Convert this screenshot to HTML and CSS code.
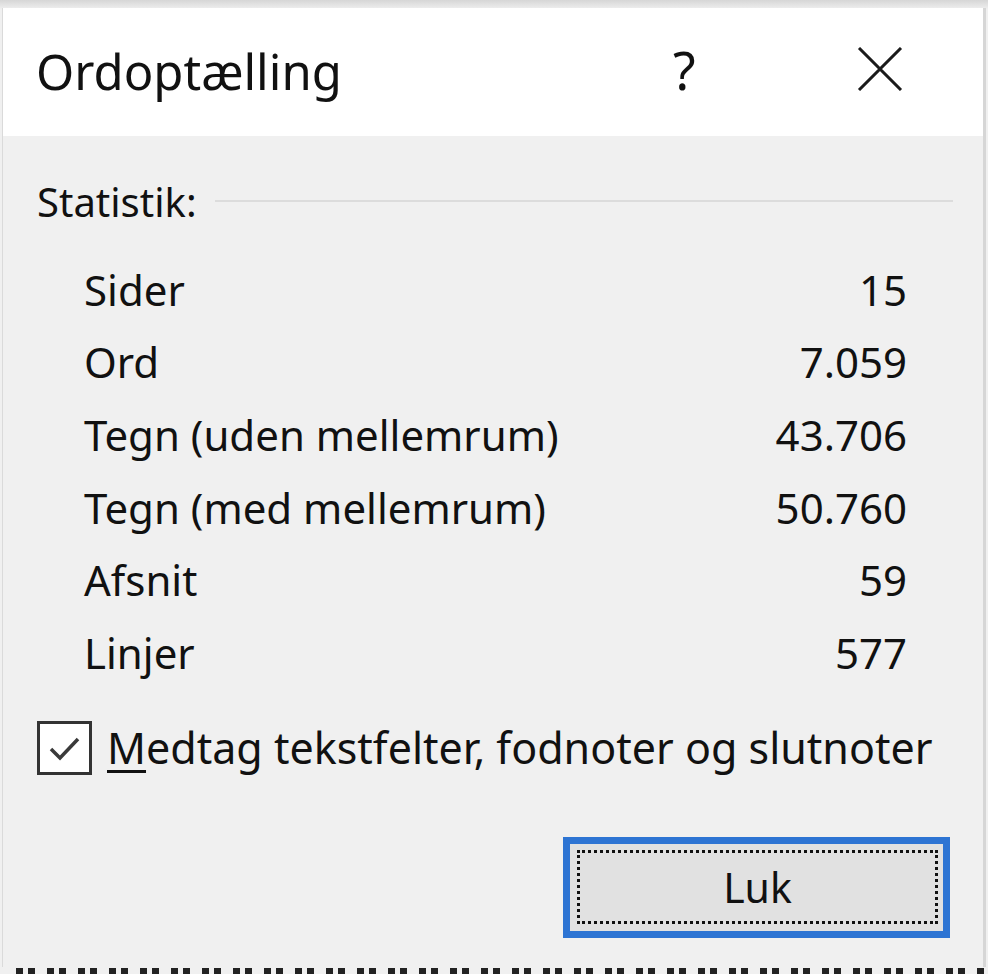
FILE: index.html
```html
<!DOCTYPE html>
<html lang="da">
<head>
<meta charset="utf-8">
<title>Ordoptælling</title>
<link rel="stylesheet" href="styles.css">
</head>
<body>
<div class="window">
  <div class="titlebar">
    <div class="title">Ordoptælling</div>
    <div class="help">?</div>
    <div class="close">
      <svg width="46" height="44" viewBox="0 0 46 44"><path d="M2 1 L44 43 M44 1 L2 43" stroke="#1a1a1a" stroke-width="3" fill="none"/></svg>
    </div>
  </div>
  <div class="content">
    <div class="group">
      <span class="group-label">Statistik:</span>
      <span class="group-line"></span>
    </div>
    <div class="stats">
      <div class="row"><span>Sider</span><span>15</span></div>
      <div class="row"><span>Ord</span><span>7.059</span></div>
      <div class="row"><span>Tegn (uden mellemrum)</span><span>43.706</span></div>
      <div class="row"><span>Tegn (med mellemrum)</span><span>50.760</span></div>
      <div class="row"><span>Afsnit</span><span>59</span></div>
      <div class="row"><span>Linjer</span><span>577</span></div>
    </div>
    <div class="check-row">
      <span class="checkbox">
        <svg width="40" height="36" viewBox="0 0 40 36"><path d="M6 19 L15 28 L33 9" stroke="#3a3a3a" stroke-width="3.5" fill="none"/></svg>
      </span>
      <span class="check-label"><u>M</u>edtag tekstfelter, fodnoter og slutnoter</span>
    </div>
    <div class="buttons">
      <div class="button"><div class="focus">Luk</div></div>
    </div>
  </div>
</div>
<div class="behind"></div>
</body>
</html>
```

FILE: styles.css
```css
html, body {
  margin: 0;
  padding: 0;
}
body {
  width: 988px;
  height: 974px;
  overflow: hidden;
  background: linear-gradient(#d6d6d6, #ececec 8px, #f0f0f0 9px);
  font-family: "Noto Sans", "Open Sans", sans-serif;
  color: #111;
}
.window {
  margin: 8px 2px 0 2px;
  height: 959px;
  background: #f0f0f0;
  border-left: 1px solid #dadada;
  border-right: 3px solid #d6d6d6;
  box-sizing: border-box;
}
.titlebar {
  height: 128px;
  background: #fff;
  display: flex;
  align-items: center;
  padding-left: 33px;
  box-sizing: border-box;
}
.title {
  font-size: 49px;
  flex: 1;
  margin-top: -2px;
}
.help {
  font-size: 52px;
  width: 40px;
  margin-right: 144px;
  margin-top: -6px;
}
.close {
  width: 46px;
  height: 44px;
  margin-right: 80px;
  margin-top: -6px;
}
.close svg { display: block; }
.content {
  padding: 40px 33px 0 34px;
}
.group {
  display: flex;
  align-items: center;
  height: 50px;
  margin-right: -3px;
}
.group-label {
  font-size: 40px;
}
.group-line {
  flex: 1;
  height: 2px;
  background: #dcdcdc;
  margin-left: 18px;
}
.stats {
  margin-top: 27px;
  padding-left: 47px;
  padding-right: 43px;
}
.row {
  display: flex;
  justify-content: space-between;
  height: 72.6px;
  align-items: center;
  font-size: 42px;
}
.check-row {
  display: flex;
  align-items: center;
  margin-top: 31px;
}
.checkbox {
  width: 55px;
  height: 54px;
  box-sizing: border-box;
  border: 3px solid #333;
  background: #fff;
  display: flex;
  align-items: center;
  justify-content: center;
}
.check-label {
  font-size: 43px;
  margin-left: 15px;
  margin-top: -2px;
}
.check-label u {
  text-decoration-thickness: 3px;
  text-underline-offset: 6px;
}
.buttons {
  display: flex;
  justify-content: flex-end;
  margin-top: 60px;
  padding-right: 0;
}
.button {
  width: 387px;
  height: 101px;
  box-sizing: border-box;
  border: 7px solid #2d74d3;
  background: #e1e1e1;
  padding: 6px 5px 7px 7px;
}
.focus {
  height: 100%;
  box-sizing: border-box;
  border: 3px dotted #111;
  display: flex;
  align-items: center;
  justify-content: center;
  font-size: 41px;
}
.behind {
  position: absolute;
  left: 16px;
  top: 968px;
  width: 972px;
  height: 6px;
  background: repeating-linear-gradient(90deg, #222 0 7px, transparent 7px 12px, #222 12px 19px, transparent 19px 31px);
}
```
